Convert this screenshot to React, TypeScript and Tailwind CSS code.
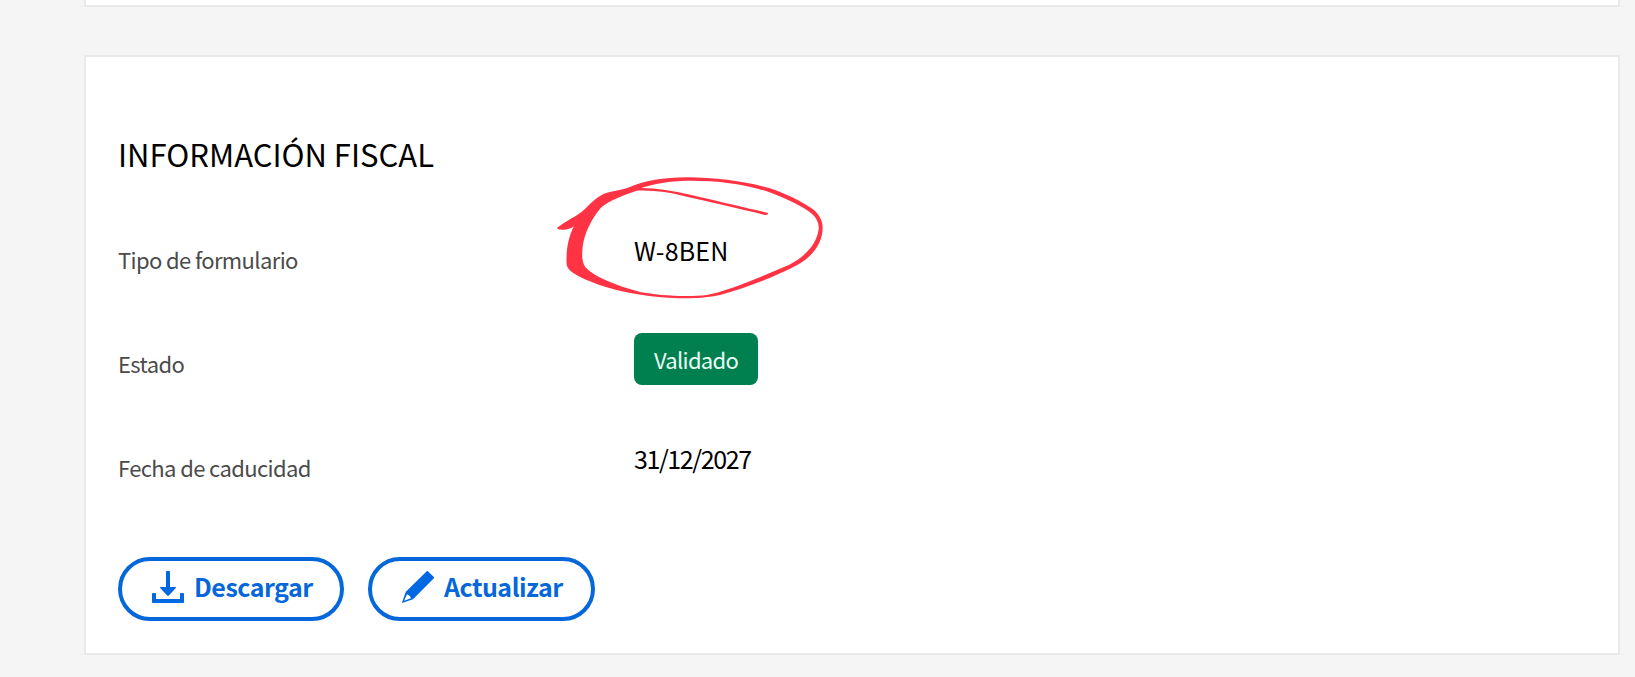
import type { ReactNode } from 'react';

interface RowProps {
  label: string;
  children: ReactNode;
}

function DownloadIcon() {
  return (
    <svg viewBox="0 0 96 96" className="w-8 h-8 shrink-0" fill="#0068e0">
      <path d="M45 0h6a3 3 0 0 1 3 3v45h16q4 0 1.500 3.200L50.500 73.500q-2.500 2.500-5 0L24.500 51.200Q22 48 26 48h16V3a3 3 0 0 1 3-3z" />
      <path d="M3 66h6a3 3 0 0 1 3 3v15h72V69a3 3 0 0 1 3-3h6a3 3 0 0 1 3 3v24a3 3 0 0 1-3 3H3a3 3 0 0 1-3-3V69a3 3 0 0 1 3-3z" />
    </svg>
  );
}

function PencilIcon() {
  return (
    <svg viewBox="0 0 96 96" className="w-8 h-8 shrink-0" fill="#0068e0">
      <path
        fillRule="evenodd"
        d="M73.500 1.200a3.500 3.500 0 0 1 5 0L94.800 17.500a3.500 3.500 0 0 1 0 5L33 84.500 2.500 95.500Q-.5 96 .5 93L11.500 62.500zM15 70L6.500 89.500 27 82Q26 75 15 70z"
      />
    </svg>
  );
}

function HandDrawnCircle() {
  return (
    <svg
      viewBox="0 0 900 450"
      className="absolute -left-[94px] -top-[69px] w-[300px] h-[150px] max-w-none pointer-events-none"
      fill="#ff3344"
    >
      <path d="M51 204C80 182 112 168 134 148C152 128 170 112 192 101C214 92 240 91 264 83C312 62 372 52 440 52C530 52 620 65 690 85C742 103 786 125 818 147C838 163 848 182 848 204C847 252 816 291 772 315C704 351 622 382 540 405C500 415 440 416 400 414C300 410 210 390 150 364C112 348 84 334 80 314C78 280 82 236 102 198C92 208 72 211 54 208ZM290 92C250 105 208 122 184 142C152 180 134 220 128 260C125 290 126 306 136 322C166 352 225 376 300 396C350 406 440 412 500 405C560 394 660 352 748 314C796 290 830 252 836 208C838 186 826 168 806 154C770 130 724 110 680 94C610 71 530 61 440 62C390 63 340 71 304 84C400 85 500 118 580 134C620 144 655 151 684 159Q685 165 676 165C600 146 500 124 440 110C390 97 340 90 290 92Z" />
    </svg>
  );
}

function Row({ label, children }: RowProps) {
  return (
    <div className="flex h-[104px]">
      <div className="w-[516px] pt-3.5 shrink-0">
        <span className="block text-[22px] leading-8 tracking-[-0.62px] text-[#4b4b4b] whitespace-nowrap">{label}</span>
      </div>
      <div className="relative">{children}</div>
    </div>
  );
}

function PillButton({ icon, children }: { icon: ReactNode; children: ReactNode }) {
  return (
    <button className="flex items-center h-16 pl-[30px] pb-1 border-4 border-[#0567da] rounded-full text-[#0567da] text-[25px] leading-8 tracking-[-0.5px] font-bold first:w-[226px] last:w-[227px]">
      {icon}
      <span className="ml-2.5 pb-0.5 whitespace-nowrap">{children}</span>
    </button>
  );
}

export default function App() {
  return (
    <div className="h-[677px] overflow-hidden bg-[#f5f5f5] pl-[84px] pr-[15px] font-['Noto_Sans_CJK_JP','Open_Sans',sans-serif]">
      <div className="h-[7px] bg-white border-2 border-t-0 border-[#eaeaea]" />

      <section className="mt-12 h-[600px] bg-white border-2 border-[#eaeaea] px-8 pt-[77px]">
        <h2 className="text-[31px] leading-10 text-black whitespace-nowrap mb-[55px]">INFORMACIÓN FISCAL</h2>

        <Row label="Tipo de formulario">
          <span className="block pt-[3px] text-[25px] leading-9 tracking-[0.15px] text-black whitespace-nowrap">
            W-8BEN
          </span>
          <HandDrawnCircle />
        </Row>
        <Row label="Estado">
          <span className="flex justify-center w-[124px] h-[52px] pt-2.5 rounded-lg bg-[#007f4f] text-[22px] leading-8 tracking-[-0.7px] text-[#eafff6]">
            Validado
          </span>
        </Row>
        <Row label="Fecha de caducidad">
          <span className="block pt-[3px] text-[25px] leading-9 tracking-[-1.4px] text-black whitespace-nowrap">
            31/12/2027
          </span>
        </Row>

        <div className="flex gap-6 mt-4">
          <PillButton icon={<DownloadIcon />}>Descargar</PillButton>
          <PillButton icon={<PencilIcon />}>Actualizar</PillButton>
        </div>
      </section>
    </div>
  );
}
